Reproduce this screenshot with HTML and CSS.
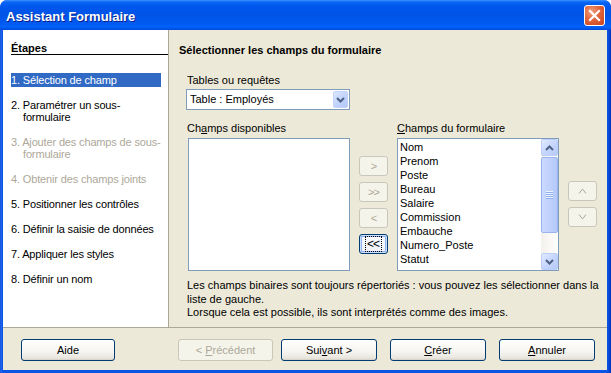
FILE: index.html
```html
<!DOCTYPE html>
<html lang="fr">
<head>
<meta charset="utf-8">
<title>Assistant Formulaire</title>
<link rel="stylesheet" href="styles.css">
</head>
<body>
<div class="window">
  <div class="titlebar">
    <span class="title">Assistant Formulaire</span>
    <div class="close">
      <svg width="19" height="19" viewBox="0 0 19 19"><path d="M5 5 L14 14 M14 5 L5 14" stroke="#fff" stroke-width="2.2" stroke-linecap="square" fill="none"/></svg>
    </div>
  </div>
  <div class="client">
    <div class="main">
      <div class="steps">
        <div class="steps-head">Étapes</div>
        <ul class="step-list">
          <li class="step active">1. Sélection de champ</li>
          <li class="step">2. Paramétrer un sous-<br>formulaire</li>
          <li class="step disabled">3. Ajouter des champs de sous-<br>formulaire</li>
          <li class="step disabled">4. Obtenir des champs joints</li>
          <li class="step">5. Positionner les contrôles</li>
          <li class="step">6. Définir la saisie de données</li>
          <li class="step">7. Appliquer les styles</li>
          <li class="step">8. Définir un nom</li>
        </ul>
      </div>
      <div class="page">
        <div class="page-title">Sélectionner les champs du formulaire</div>
        <div class="form">
          <div class="label">Tables ou requêtes</div>
          <div class="combo">
            <span class="combo-text">Table : Employés</span>
            <span class="combo-btn">
              <svg width="9" height="6" viewBox="0 0 9 6"><path d="M1 1 L4.5 4.5 L8 1" stroke="#4D6185" stroke-width="2" fill="none"/></svg>
            </span>
          </div>
          <div class="lists">
            <div class="label lbl-left">Ch<u>a</u>mps disponibles</div>
            <div></div>
            <div class="label"><u>C</u>hamps du formulaire</div>
            <div></div>
            <div class="listbox"></div>
            <div class="move-btns">
              <div class="sbtn disabled"><span>&gt;</span></div>
              <div class="sbtn disabled"><span>&gt;&gt;</span></div>
              <div class="sbtn disabled"><span>&lt;</span></div>
              <div class="sbtn focus"><span class="focus-rect">&lt;&lt;</span></div>
            </div>
            <div class="listbox with-scroll">
              <ul class="items">
                <li>Nom</li>
                <li>Prenom</li>
                <li>Poste</li>
                <li>Bureau</li>
                <li>Salaire</li>
                <li>Commission</li>
                <li>Embauche</li>
                <li>Numero_Poste</li>
                <li>Statut</li>
              </ul>
              <div class="scrollbar">
                <div class="sb-btn">
                  <svg width="9" height="6" viewBox="0 0 9 6"><path d="M1 5 L4.5 1.5 L8 5" stroke="#4D6185" stroke-width="2" fill="none"/></svg>
                </div>
                <div class="sb-thumb">
                  <span class="grip"></span>
                </div>
                <div class="sb-track"></div>
                <div class="sb-btn">
                  <svg width="9" height="6" viewBox="0 0 9 6"><path d="M1 1 L4.5 4.5 L8 1" stroke="#4D6185" stroke-width="2" fill="none"/></svg>
                </div>
              </div>
            </div>
            <div class="order-btns">
              <div class="sbtn disabled">
                <svg width="9" height="6" viewBox="0 0 9 6"><path d="M1 5.5 L4.5 1 L8 5.5" stroke="#ACA899" stroke-width="1" fill="none"/></svg>
              </div>
              <div class="sbtn disabled">
                <svg width="9" height="6" viewBox="0 0 9 6"><path d="M1 0.5 L4.5 5 L8 0.5" stroke="#ACA899" stroke-width="1" fill="none"/></svg>
              </div>
            </div>
          </div>
          <p class="note">Les champs binaires sont toujours répertoriés : vous pouvez les sélectionner dans la<br>liste de gauche.<br>Lorsque cela est possible, ils sont interprétés comme des images.</p>
        </div>
      </div>
    </div>
    <div class="footer">
      <div class="btn btn-help"><span>Aide</span></div>
      <div class="btn-group">
        <div class="btn btn-prev disabled"><span>&lt; <u>P</u>récédent</span></div>
        <div class="btn btn-next"><span>Sui<u>v</u>ant &gt;</span></div>
        <div class="btn btn-create"><span><u>C</u>réer</span></div>
        <div class="btn btn-cancel"><span><u>A</u>nnuler</span></div>
      </div>
    </div>
  </div>
</div>
</body>
</html>
```
FILE: styles.css
```css
* { box-sizing: border-box; }
html, body { margin: 0; padding: 0; }
body {
  width: 611px;
  height: 373px;
  background: #ffffff;
  font-family: "Liberation Sans", Arial, sans-serif;
  font-size: 11px;
  color: #000;
  overflow: hidden;
}
.window {
  width: 611px;
  height: 373px;
  display: flex;
  flex-direction: column;
  border-radius: 7px 7px 0 0;
  background: linear-gradient(to right, #0A3FD0 0, #2C74F0 1px, #0A55E6 2px, #0A55E6 607px, #0847D4 609px, #0033B8 611px);
  overflow: hidden;
}
.titlebar {
  height: 30px;
  flex: none;
  display: flex;
  align-items: center;
  justify-content: space-between;
  padding: 0 6px 0 6px;
  background: linear-gradient(to bottom, #3D95FF 0, #0A66F5 2px, #0058EE 6px, #0054E6 14px, #0058EE 22px, #0062FA 27px, #0048DA 30px);
  border-radius: 7px 7px 0 0;
}
.title {
  color: #fff;
  font-weight: bold;
  font-size: 13px;
  padding-top: 2px;
  text-shadow: 1px 1px 0 #0A1E8A;
}
.close {
  width: 21px;
  height: 21px;
  margin-top: 1px;
  border: 1px solid #fff;
  border-radius: 3px;
  background: radial-gradient(circle at 35% 30%, #F0A080 0, #E2643C 45%, #C8421A 100%);
  display: flex;
  align-items: center;
  justify-content: center;
}
.close svg { display: block; }
.client {
  flex: 1;
  margin: 0 4px 3px 3px;
  background: #ECE9D8;
  display: flex;
  flex-direction: column;
}
.main {
  height: 298px;
  flex: none;
  display: flex;
  border-bottom: 1px solid #ACA899;
}
.steps {
  width: 166px;
  flex: none;
  background: #fff;
  border-right: 1px solid #ACA899;
  padding-top: 12px;
  overflow: hidden;
}
.steps-head {
  margin-left: 8px;
  font-weight: bold;
  line-height: 12px;
  border-bottom: 1px solid #000;
}
.step-list {
  list-style: none;
  margin: 18px 0 0 0;
  padding: 0;
  display: flex;
  flex-direction: column;
  gap: 11px;
}
.step {
  margin-left: 8px;
  width: 150px;
  line-height: 12px;
  padding: 1px 0 1px 12px;
  text-indent: -12px;
  white-space: nowrap;
  letter-spacing: -0.15px;
}
.step.active {
  background: #316AC5;
  color: #fff;
}
.step.disabled { color: #ACA899; }
.page {
  flex: 1;
  padding-top: 14px;
}
.page-title {
  margin-left: 10px;
  font-weight: bold;
  line-height: 13px;
}
.form {
  margin-left: 18px;
  margin-top: 17px;
}
.label { line-height: 13px; }
.combo {
  margin-top: 2px;
  width: 164px;
  margin-left: -1px;
  height: 21px;
  border: 1px solid #7F9DB9;
  background: #fff;
  display: flex;
  align-items: center;
  justify-content: space-between;
}
.combo-text {
  padding-left: 3px;
  line-height: 19px;
}
.combo-btn {
  width: 15px;
  height: 17px;
  margin-right: 1px;
  border-radius: 2px;
  background: linear-gradient(135deg, #DCE6FE 0, #C3D4FC 50%, #B4C8F7 100%);
  border: 1px solid #C3D3FA;
  display: flex;
  align-items: center;
  justify-content: center;
}
.combo-btn svg, .sb-btn svg, .sbtn svg { display: block; }
.lists {
  margin-top: 12px;
  margin-left: 1px;
  display: grid;
  grid-template-columns: 162px 29px 162px 29px;
  grid-template-rows: 13px 133px;
  column-gap: 9px;
  row-gap: 3px;
}
.lbl-left { margin-left: -1px; }
.listbox {
  border: 1px solid #7F9DB9;
  background: #fff;
}
.with-scroll { display: flex; }
.items {
  list-style: none;
  flex: 1;
  margin: 0;
  padding: 1px 2px;
}
.items li {
  line-height: 14px;
  white-space: nowrap;
}
.scrollbar {
  width: 17px;
  flex: none;
  display: flex;
  flex-direction: column;
  background: linear-gradient(to right, #F3F1EC 0, #FEFEFB 100%);
}
.sb-btn {
  height: 17px;
  flex: none;
  border: 1px solid #BBCDF8;
  border-radius: 2px;
  background: linear-gradient(135deg, #E2EAFE 0, #C6D6FD 50%, #B6CAF8 100%);
  display: flex;
  align-items: center;
  justify-content: center;
}
.sb-thumb {
  height: 76px;
  margin-top: 1px;
  flex: none;
  border: 1px solid #9CB4EE;
  border-radius: 2px;
  background: linear-gradient(to right, #CAD9FD 0, #C2D3FC 40%, #B4C8F8 100%);
  display: flex;
  align-items: center;
  justify-content: center;
}
.grip {
  width: 7px;
  height: 8px;
  background: repeating-linear-gradient(to bottom, #EEF4FE 0, #EEF4FE 1px, #8EAEF0 1px, #8EAEF0 2px);
}
.sb-track { flex: 1; }
.move-btns {
  display: flex;
  flex-direction: column;
  gap: 6px;
  padding-top: 18px;
}
.order-btns {
  display: flex;
  flex-direction: column;
  gap: 6px;
  padding-top: 43px;
}
.sbtn {
  height: 20px;
  border: 1px solid #003C74;
  border-radius: 3px;
  background: linear-gradient(#fff, #F0F0EA 85%, #D8D2C6);
  display: flex;
  align-items: center;
  justify-content: center;
  line-height: 12px;
  letter-spacing: -1px;
}
.sbtn.disabled {
  border-color: #C9C7BA;
  background: #F5F4EA;
  color: #ACA899;
}
.sbtn.focus {
  box-shadow: inset 0 0 0 1px #CDE0FC, inset 0 0 0 2px #8FB3EF;
  background: linear-gradient(#F8FAFF, #EEF1F8);
}
.focus-rect {
  outline: 1px dotted #000;
  padding: 1px 2px 1px 1px;
  font-size: 12px;
}
.note {
  margin: 8px 0 0 0;
  line-height: 13.5px;
}
.footer {
  flex: 1;
  display: flex;
  align-items: flex-start;
  padding: 11px 12px 0 18px;
}
.btn {
  height: 22px;
  border: 1px solid #003C74;
  border-radius: 3px;
  background: linear-gradient(#FFFFFF 0, #F5F4F0 60%, #E8E6DE 90%, #D6D0C5 100%);
  display: flex;
  align-items: center;
  justify-content: center;
  line-height: 13px;
  white-space: pre;
}
.btn.disabled {
  border-color: #C9C7BA;
  background: #F5F4EA;
  color: #ACA899;
}
.btn-help { width: 94px; }
.btn-group {
  margin-left: auto;
  display: flex;
}
.btn-prev { width: 95px; }
.btn-next { width: 96px; margin-left: 8px; }
.btn-create { width: 96px; margin-left: 13px; }
.btn-cancel { width: 96px; margin-left: 13px; }
```
